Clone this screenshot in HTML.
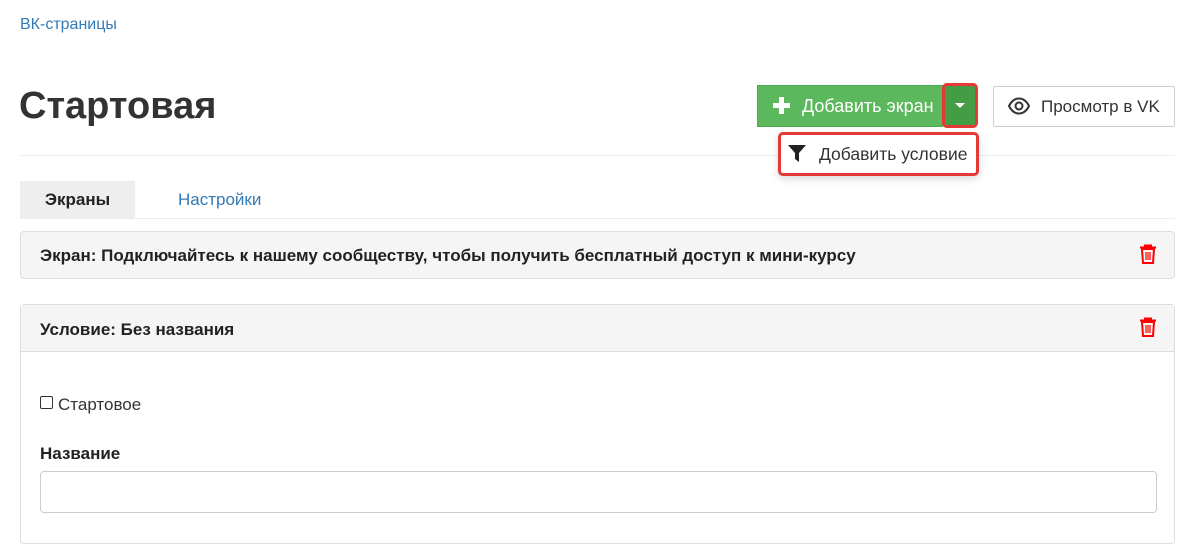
<!DOCTYPE html>
<html><head><meta charset="utf-8"><style>
*{box-sizing:border-box}
body{margin:0;width:1200px;height:527px;overflow:hidden;background:#fff;font-family:"Liberation Sans","DejaVu Sans",sans-serif;color:#333}
.a{position:absolute}
</style></head><body>
<div class="a" style="left:20px;top:16px;font-size:16px;color:#337ab7">ВК-страницы</div>
<div class="a" style="left:19px;top:85px;font-size:38px;font-weight:bold;color:#333">Стартовая</div>
<div class="a" style="left:20px;top:155px;width:1155px;height:1px;background:#eee"></div>

<div class="a" style="left:757px;top:85px;width:186px;height:42px;background:#5cb85c;border:1px solid #4cae4c;color:#fff;font-size:18px;line-height:40px;padding-left:44px">Добавить экран</div>
<svg class="a" style="left:773px;top:97px" width="17" height="17" viewBox="0 0 17 17"><path d="M6 0h5v6h6v5h-6v6H6v-6H0V6h6z" fill="#fff"/></svg>
<div class="a" style="left:942px;top:83px;width:36px;height:45px;background:#449d44;border:3px solid #e53935;border-radius:5px"></div>
<svg class="a" style="left:955px;top:103px" width="10" height="6"><path d="M0 0h10L5 5z" fill="#fff"/></svg>

<div class="a" style="left:993px;top:86px;width:182px;height:41px;border:1px solid #ccc;border-radius:2px;font-size:17px;line-height:39px;padding-left:47px;color:#333">Просмотр в VK</div>
<svg class="a" style="left:1008px;top:97px" width="22" height="18" viewBox="0 0 22 18"><path d="M1 9C4 3 8 1.5 11 1.5S18 3 21 9C18 15 14 16.5 11 16.5S4 15 1 9z" fill="none" stroke="#333" stroke-width="2"/><circle cx="11" cy="9" r="3.5" fill="none" stroke="#333" stroke-width="2"/></svg>

<div class="a" style="left:778px;top:132px;width:201px;height:44px;border:3px solid #e53935;border-radius:5px;background:#fff;box-shadow:0 3px 8px rgba(0,0,0,.15);font-size:17.5px;line-height:38px;padding-left:38px;color:#333">Добавить условие</div>
<svg class="a" style="left:788px;top:145px" width="18" height="17" viewBox="0 0 18 17"><path d="M0 0h18l-7 8v9l-4-3V8z" fill="#222"/></svg>

<div class="a" style="left:20px;top:181px;width:115px;height:37px;background:#eee;font-size:17px;font-weight:bold;line-height:38px;text-align:center;color:#222">Экраны</div>
<div class="a" style="left:178px;top:181px;font-size:17px;line-height:38px;color:#337ab7">Настройки</div>
<div class="a" style="left:20px;top:218px;width:1155px;height:1px;background:#eee"></div>

<div class="a" style="left:20px;top:231px;width:1155px;height:48px;background:#f5f5f5;border:1px solid #ddd;border-radius:4px;font-size:17px;font-weight:bold;line-height:48px;padding-left:19px;color:#222">Экран: Подключайтесь к нашему сообществу, чтобы получить бесплатный доступ к мини-курсу</div>
<svg class="a" style="left:1139px;top:244px" width="18" height="21" viewBox="0 0 18 21"><path d="M6 3V1.5h6V3M1 3.5h16M3 5l1 14h10l1-14z" fill="none" stroke="#f00" stroke-width="2"/><path d="M7 8v8M9 8v8M11 8v8" stroke="#f00" stroke-width="1.2"/></svg>

<div class="a" style="left:20px;top:304px;width:1155px;height:240px;border:1px solid #ddd;border-radius:4px;background:#fff">
<div style="height:47px;background:#f5f5f5;border-bottom:1px solid #ddd;font-size:17px;font-weight:bold;line-height:49px;padding-left:19px;color:#222">Условие: Без названия</div>
</div>
<svg class="a" style="left:1139px;top:317px" width="18" height="21" viewBox="0 0 18 21"><path d="M6 3V1.5h6V3M1 3.5h16M3 5l1 14h10l1-14z" fill="none" stroke="#f00" stroke-width="2"/><path d="M7 8v8M9 8v8M11 8v8" stroke="#f00" stroke-width="1.2"/></svg>

<div class="a" style="left:40px;top:396px;width:13px;height:13px;border:1px solid #333;border-radius:2px;background:#fff"></div>
<div class="a" style="left:58px;top:395px;font-size:17px;color:#333">Стартовое</div>
<div class="a" style="left:40px;top:444px;font-size:17px;font-weight:bold;color:#222">Название</div>
<div class="a" style="left:40px;top:471px;width:1117px;height:42px;border:1px solid #ccc;border-radius:4px"></div>
</body></html>
